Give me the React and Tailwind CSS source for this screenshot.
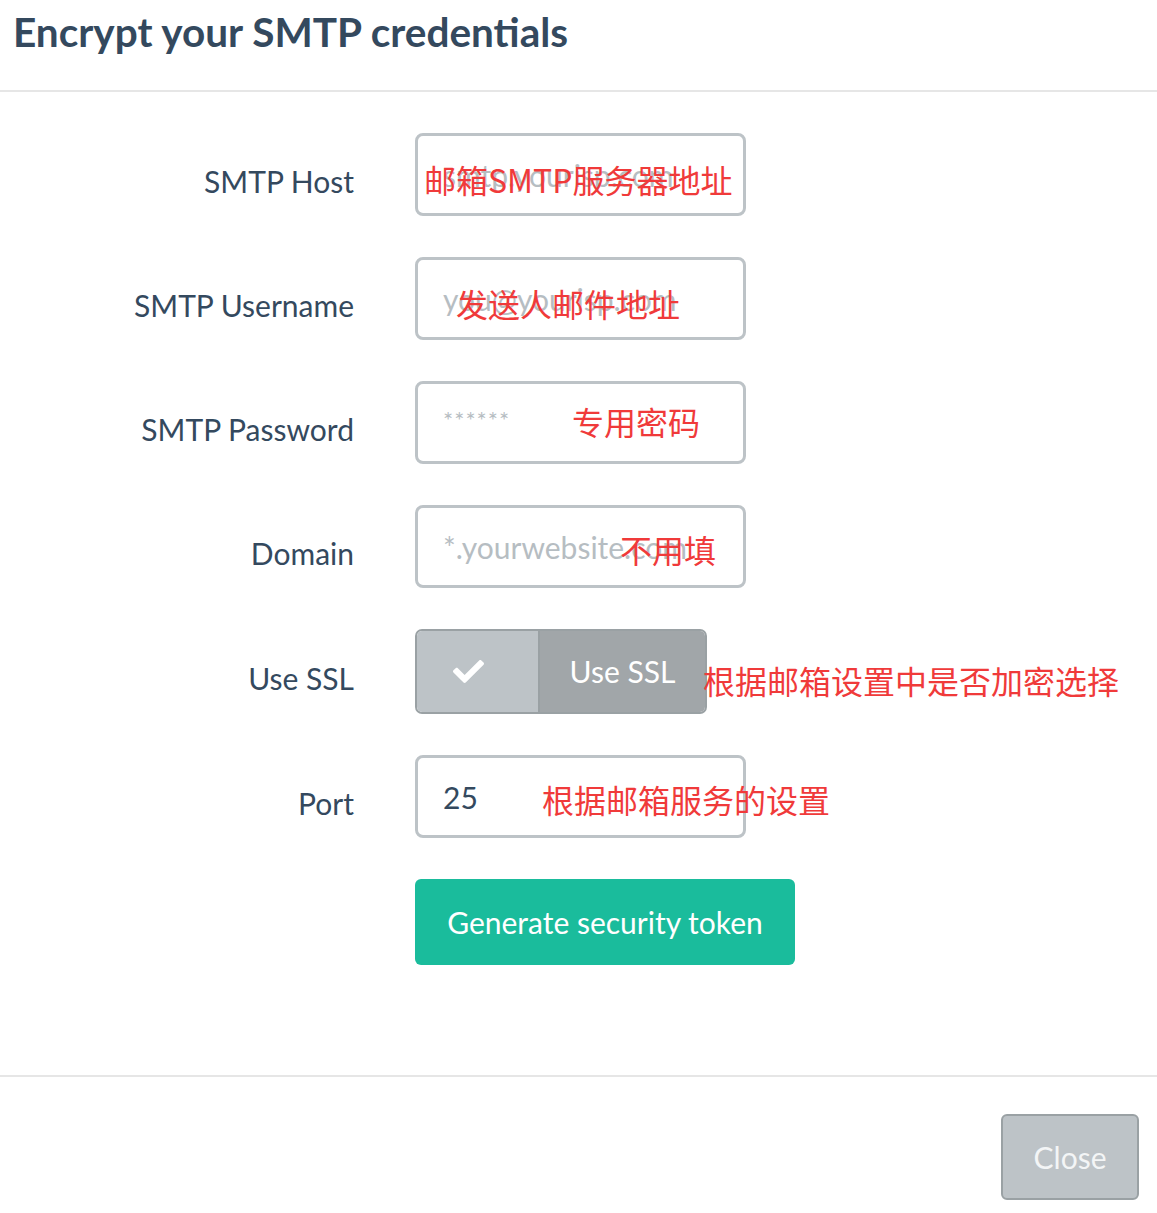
import React from "react";
import { FaCheck } from "react-icons/fa";

const lato = { fontFamily: "Lato, 'Noto Sans', sans-serif" };

function Row({ label, children, h = "h-[83px]" }) {
  return (
    <div className={`flex items-center ${h}`}>
      <div className="w-[354px] text-right text-[30px] text-[#34495e] pt-[13px] leading-none">{label}</div>
      <div className="ml-[61px] h-full">{children}</div>
    </div>
  );
}

function Input({ placeholder, value }) {
  return (
    <div className="w-[331px] h-full border-[3px] border-[#bdc3c7] rounded-[8px] bg-white flex items-center pl-[25px] text-[30px] leading-none">
      {value ? (
        <span className="text-[#34495e]">{value}</span>
      ) : (
        <span className="text-[#b6bdc2]">{placeholder}</span>
      )}
    </div>
  );
}

function Note({ children, left, top }) {
  return (
    <div
      className="absolute whitespace-nowrap text-[32px] leading-none text-[#f03a3a]"
      style={{ left, top, fontFamily: "'Noto Sans CJK SC', 'Noto Sans', sans-serif" }}
    >
      {children}
    </div>
  );
}

export default function App() {
  return (
    <div className="relative w-[1157px] h-[1213px] bg-white overflow-hidden" style={lato}>
      <div className="h-[92px] border-b-2 border-[#e6e6e6] pl-[13px] pt-[8px]">
        <h1 className="text-[40.5px] font-bold text-[#34495e] leading-[48px]">Encrypt your SMTP credentials</h1>
      </div>

      <div className="pt-[41px] flex flex-col gap-[41px]">
        <Row label="SMTP Host">
          <Input placeholder="smtp.yourisp.com" />
        </Row>
        <Row label="SMTP Username">
          <Input placeholder="you@yourisp.com" />
        </Row>
        <Row label="SMTP Password">
          <div className="w-[331px] h-full border-[3px] border-[#bdc3c7] rounded-[8px] bg-white flex items-start pt-[24px] pl-[25px] text-[24px] leading-none tracking-[1px] text-[#b6bdc2]">
            ******
          </div>
        </Row>
        <Row label="Domain">
          <Input placeholder="*.yourwebsite.com" />
        </Row>
        <Row label="Use SSL" h="h-[85px]">
          <div className="flex h-full w-[292px] rounded-[7px] overflow-hidden border-2 border-[#9aa1a4]">
            <div className="w-[121px] bg-[#bdc3c7] flex items-center justify-center pr-[18px] text-white">
              <FaCheck size={31} />
            </div>
            <div className="flex-1 bg-[#a1a6a9] border-l-2 border-[#9aa1a4] flex items-center justify-center text-white text-[30px] leading-none pb-[2px]">
              Use SSL
            </div>
          </div>
        </Row>
        <Row label="Port">
          <Input value="25" />
        </Row>
        <div className="flex h-[86px]">
          <div className="w-[354px]" />
          <button className="ml-[61px] w-[380px] h-full rounded-[6px] bg-[#1abc9c] text-white text-[30px] leading-none">
            Generate security token
          </button>
        </div>
      </div>

      <div className="mt-[110px] border-t-2 border-[#e6e6e6] flex justify-end pt-[37px] pr-[18px]">
        <button className="w-[138px] h-[86px] rounded-[6px] bg-[#bdc3c7] border-2 border-[#9aa1a4] text-[#f3f5f6] text-[30px] leading-none">
          Close
        </button>
      </div>

      <Note left={424} top={163}>邮箱SMTP服务器地址</Note>
      <Note left={456} top={287}>发送人邮件地址</Note>
      <Note left={572} top={405}>专用密码</Note>
      <Note left={620} top={533}>不用填</Note>
      <Note left={703} top={664}>根据邮箱设置中是否加密选择</Note>
      <Note left={542} top={783}>根据邮箱服务的设置</Note>
    </div>
  );
}
